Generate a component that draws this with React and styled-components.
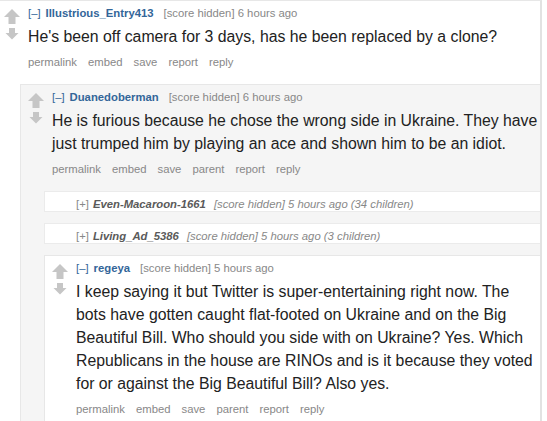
import React from "react";
import styled, { createGlobalStyle } from "styled-components";

const GlobalStyle = createGlobalStyle`
  html,
  body {
    margin: 0;
    padding: 0;
    background: #fff;
  }
  body {
    font-family: "Liberation Sans", Arial, sans-serif;
    overflow: hidden;
  }
`;

const Page = styled.div`
  width: 546px;
  margin-left: -4px;
`;

const Comment_box = styled.div`
  background-color: ${(p) => (p.$alt ? "#f5f5f5" : "#ffffff")};
  border: 1px solid #e7e7e7;
  border-right: ${(p) => (p.$top ? "2px solid #e2e2e2" : "none")};
  margin-bottom: 10px;
`;

const Comment_row = styled.div`
  display: flex;
  padding-top: 5px;
`;

const Midcol = styled.div`
  flex-shrink: 0;
  box-sizing: border-box;
  width: 31px;
  padding: 3px 0 0 7px;
  display: flex;
  flex-direction: column;
  gap: 4px;
`;

const Entry = styled.div`
  flex: 1;
  min-width: 0;
  padding-bottom: 15px;
`;

const Tagline = styled.div`
  font-size: 11.3px;
  line-height: 14px;
  color: #888;
  white-space: nowrap;
`;

const Expand = styled.span`
  color: #369;
  margin-right: 5px;
`;

const Author = styled.span`
  color: #369;
  font-weight: bold;
  margin-right: 10px;
`;

const Body_text = styled.p`
  margin: 5px 0 0;
  font-size: 15.8px;
  line-height: 23px;
  color: #222;
`;

const Buttons = styled.ul`
  display: flex;
  gap: 11px;
  list-style: none;
  margin: 7px 0 0;
  padding: 0;
  font-size: 11.3px;
  line-height: 14px;
  color: #888;
`;

const Children = styled.div`
  margin-left: 23px;
`;

const Collapsed_box = styled.div`
  background-color: #fff;
  border: 1px solid #ebebeb;
  border-right: none;
  padding: 6px 0 0 31px;
  height: 13px;
  line-height: 13px;
  font-size: 11.3px;
  color: #888;
  margin-bottom: 11px;
  white-space: nowrap;
`;

const Collapsed_author = styled.span`
  font-weight: bold;
  font-style: italic;
  color: #5a5a5a;
  margin: 0 8px 0 4px;
`;

const Collapsed_meta = styled.span`
  font-style: italic;
`;

const UpArrow = () => (
  <svg width="16" height="15" viewBox="0 0 16 15">
    <polygon points="8,0 16,8 11.5,8 11.5,15 4.5,15 4.5,8 0,8" fill="#c6c6c6" />
  </svg>
);

const DownArrow = () => (
  <svg width="16" height="12" viewBox="0 0 16 12">
    <polygon points="5,0 11,0 11,5 14.5,5 8,11.5 1.5,5 5,5" fill="#c6c6c6" />
  </svg>
);

const Comment = ({ author, time, lines, buttons, alt, top, children }) => (
  <Comment_box $alt={alt} $top={top}>
    <Comment_row>
      <Midcol>
        <UpArrow />
        <DownArrow />
      </Midcol>
      <Entry>
        <Tagline>
          <Expand>[–]</Expand>
          <Author>{author}</Author>
          [score hidden] {time}
        </Tagline>
        <Body_text>{lines}</Body_text>
        <Buttons>
          {buttons.map((b) => (
            <li key={b}>{b}</li>
          ))}
        </Buttons>
      </Entry>
    </Comment_row>
    {children && <Children>{children}</Children>}
  </Comment_box>
);

const Collapsed = ({ author, meta }) => (
  <Collapsed_box>
    [+]
    <Collapsed_author>{author}</Collapsed_author>
    <Collapsed_meta>{meta}</Collapsed_meta>
  </Collapsed_box>
);

const App = () => {
  return (
    <Page>
      <GlobalStyle />
      <Comment
        top
        author="Illustrious_Entry413"
        time="6 hours ago"
        lines="He's been off camera for 3 days, has he been replaced by a clone?"
        buttons={["permalink", "embed", "save", "report", "reply"]}
      >
        <Comment
          alt
          author="Duanedoberman"
          time="6 hours ago"
          lines="He is furious because he chose the wrong side in Ukraine. They have just trumped him by playing an ace and shown him to be an idiot."
          buttons={["permalink", "embed", "save", "parent", "report", "reply"]}
        >
          <Collapsed
            author="Even-Macaroon-1661"
            meta="[score hidden] 5 hours ago (34 children)"
          />
          <Collapsed
            author="Living_Ad_5386"
            meta="[score hidden] 5 hours ago (3 children)"
          />
          <Comment
            author="regeya"
            time="5 hours ago"
            lines="I keep saying it but Twitter is super-entertaining right now. The bots have gotten caught flat-footed on Ukraine and on the Big Beautiful Bill. Who should you side with on Ukraine? Yes. Which Republicans in the house are RINOs and is it because they voted for or against the Big Beautiful Bill? Also yes."
            buttons={["permalink", "embed", "save", "parent", "report", "reply"]}
          />
        </Comment>
      </Comment>
    </Page>
  );
};

export default App;
